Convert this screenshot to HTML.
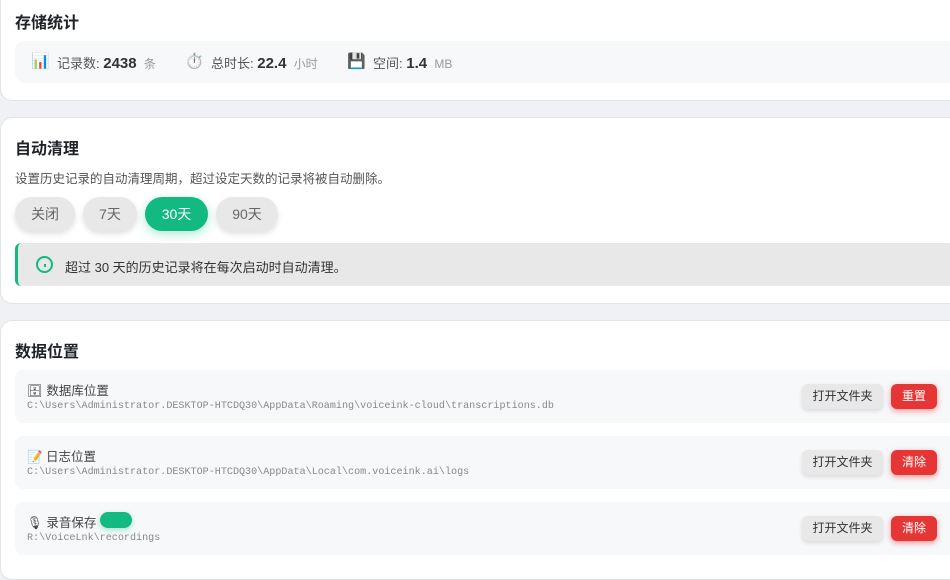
<!DOCTYPE html>
<html><head><meta charset="utf-8"><style>
*{box-sizing:border-box;margin:0;padding:0}
body{width:950px;height:560px;overflow:hidden;background:#f0f1f4;font-family:"Liberation Sans","Noto Sans CJK SC",sans-serif;color:#333;position:relative}
.card{position:absolute;left:0;width:970px;background:#fff;border-radius:12px;border:1px solid #e2e3e6}
h2{position:absolute;left:15px;font-size:16px;font-weight:bold;color:#1f2329}
.stats{position:absolute;left:15px;top:41px;width:960px;height:42px;background:#f7f8fa;border-radius:10px;font-size:13px;color:#555}
.stats span{position:absolute;top:12px}
.stats b{font-size:15px;color:#333}
.unit{color:#999;font-size:12px}
.ic{font-size:15px;top:11px!important}
.pill{position:absolute;top:197px;height:34px;border-radius:17px;background:#e8e8e8;color:#666;font-size:14px;line-height:34px;text-align:center;box-shadow:0 3px 6px rgba(0,0,0,.12)}
.info{position:absolute;left:15px;top:243px;width:940px;height:43px;background:#e8e8e8;border-left:3px solid #12b981;border-radius:6px;font-size:13px;color:#333}
.row{position:absolute;left:15px;width:960px;height:53px;background:#f7f8fa;border-radius:8px}
.lbl{position:absolute;left:12px;top:10px;font-size:12.5px;color:#444}
.path{position:absolute;left:12px;top:31px;font-family:"Liberation Mono",monospace;font-size:10.1px;color:#888}
.ob{position:absolute;left:787px;top:14px;width:81px;height:25px;border-radius:6px;background:#e8e8e8;font-size:12px;line-height:25px;text-align:center;color:#333;box-shadow:0 2px 4px rgba(0,0,0,.12)}
.rb{position:absolute;left:876px;top:14px;width:46px;height:25px;border-radius:6px;background:#e53535;color:#fff;font-size:12px;line-height:25px;text-align:center;box-shadow:0 2px 6px rgba(229,53,53,.5)}
</style></head><body>
<div class="card" style="top:-20px;height:121px"></div>
<h2 style="top:9px">存储统计</h2>
<div class="stats">
<span class="ic" style="left:16px">📊</span>
<span style="left:42px">记录数: <b>2438</b> &nbsp;<span class="unit" style="position:static">条</span></span>
<span class="ic" style="left:170px">⏱️</span>
<span style="left:196px">总时长: <b>22.4</b> &nbsp;<span class="unit" style="position:static">小时</span></span>
<span class="ic" style="left:332px">💾</span>
<span style="left:358px">空间: <b>1.4</b> &nbsp;<span class="unit" style="position:static">MB</span></span>
</div>

<div class="card" style="top:117px;height:187px"></div>
<h2 style="top:135px">自动清理</h2>
<div style="position:absolute;left:15px;top:168px;font-size:12.5px;color:#555">设置历史记录的自动清理周期，超过设定天数的记录将被自动删除。</div>
<div class="pill" style="left:15px;width:60px">关闭</div>
<div class="pill" style="left:83px;width:54px">7天</div>
<div class="pill" style="left:145px;width:63px;background:#12b981;color:#fff;box-shadow:0 3px 10px rgba(18,185,129,.35)">30天</div>
<div class="pill" style="left:216px;width:62px">90天</div>
<div class="info">
<div style="position:absolute;left:18px;top:13px;width:17px;height:17px;border:2px solid #12b981;border-radius:50%"><div style="position:absolute;left:5.5px;top:5.5px;width:2px;height:3px;background:#12b981"></div></div>
<div style="position:absolute;left:47px;top:14px">超过 30 天的历史记录将在每次启动时自动清理。</div>
</div>

<div class="card" style="top:320px;height:260px"></div>
<h2 style="top:338px">数据位置</h2>
<div class="row" style="top:370px"><div class="lbl">🗄 数据库位置</div><div class="path">C:\Users\Administrator.DESKTOP-HTCDQ30\AppData\Roaming\voiceink-cloud\transcriptions.db</div><div class="ob">打开文件夹</div><div class="rb">重置</div></div>
<div class="row" style="top:436px"><div class="lbl">📝 日志位置</div><div class="path">C:\Users\Administrator.DESKTOP-HTCDQ30\AppData\Local\com.voiceink.ai\logs</div><div class="ob">打开文件夹</div><div class="rb">清除</div></div>
<div class="row" style="top:502px"><div class="lbl">🎙 录音保存</div><div style="position:absolute;left:85px;top:10px;width:32px;height:16px;border-radius:8px;background:#12b981;box-shadow:0 2px 6px rgba(18,185,129,.35)"></div><div class="path">R:\VoiceLnk\recordings</div><div class="ob">打开文件夹</div><div class="rb">清除</div></div>
</body></html>
